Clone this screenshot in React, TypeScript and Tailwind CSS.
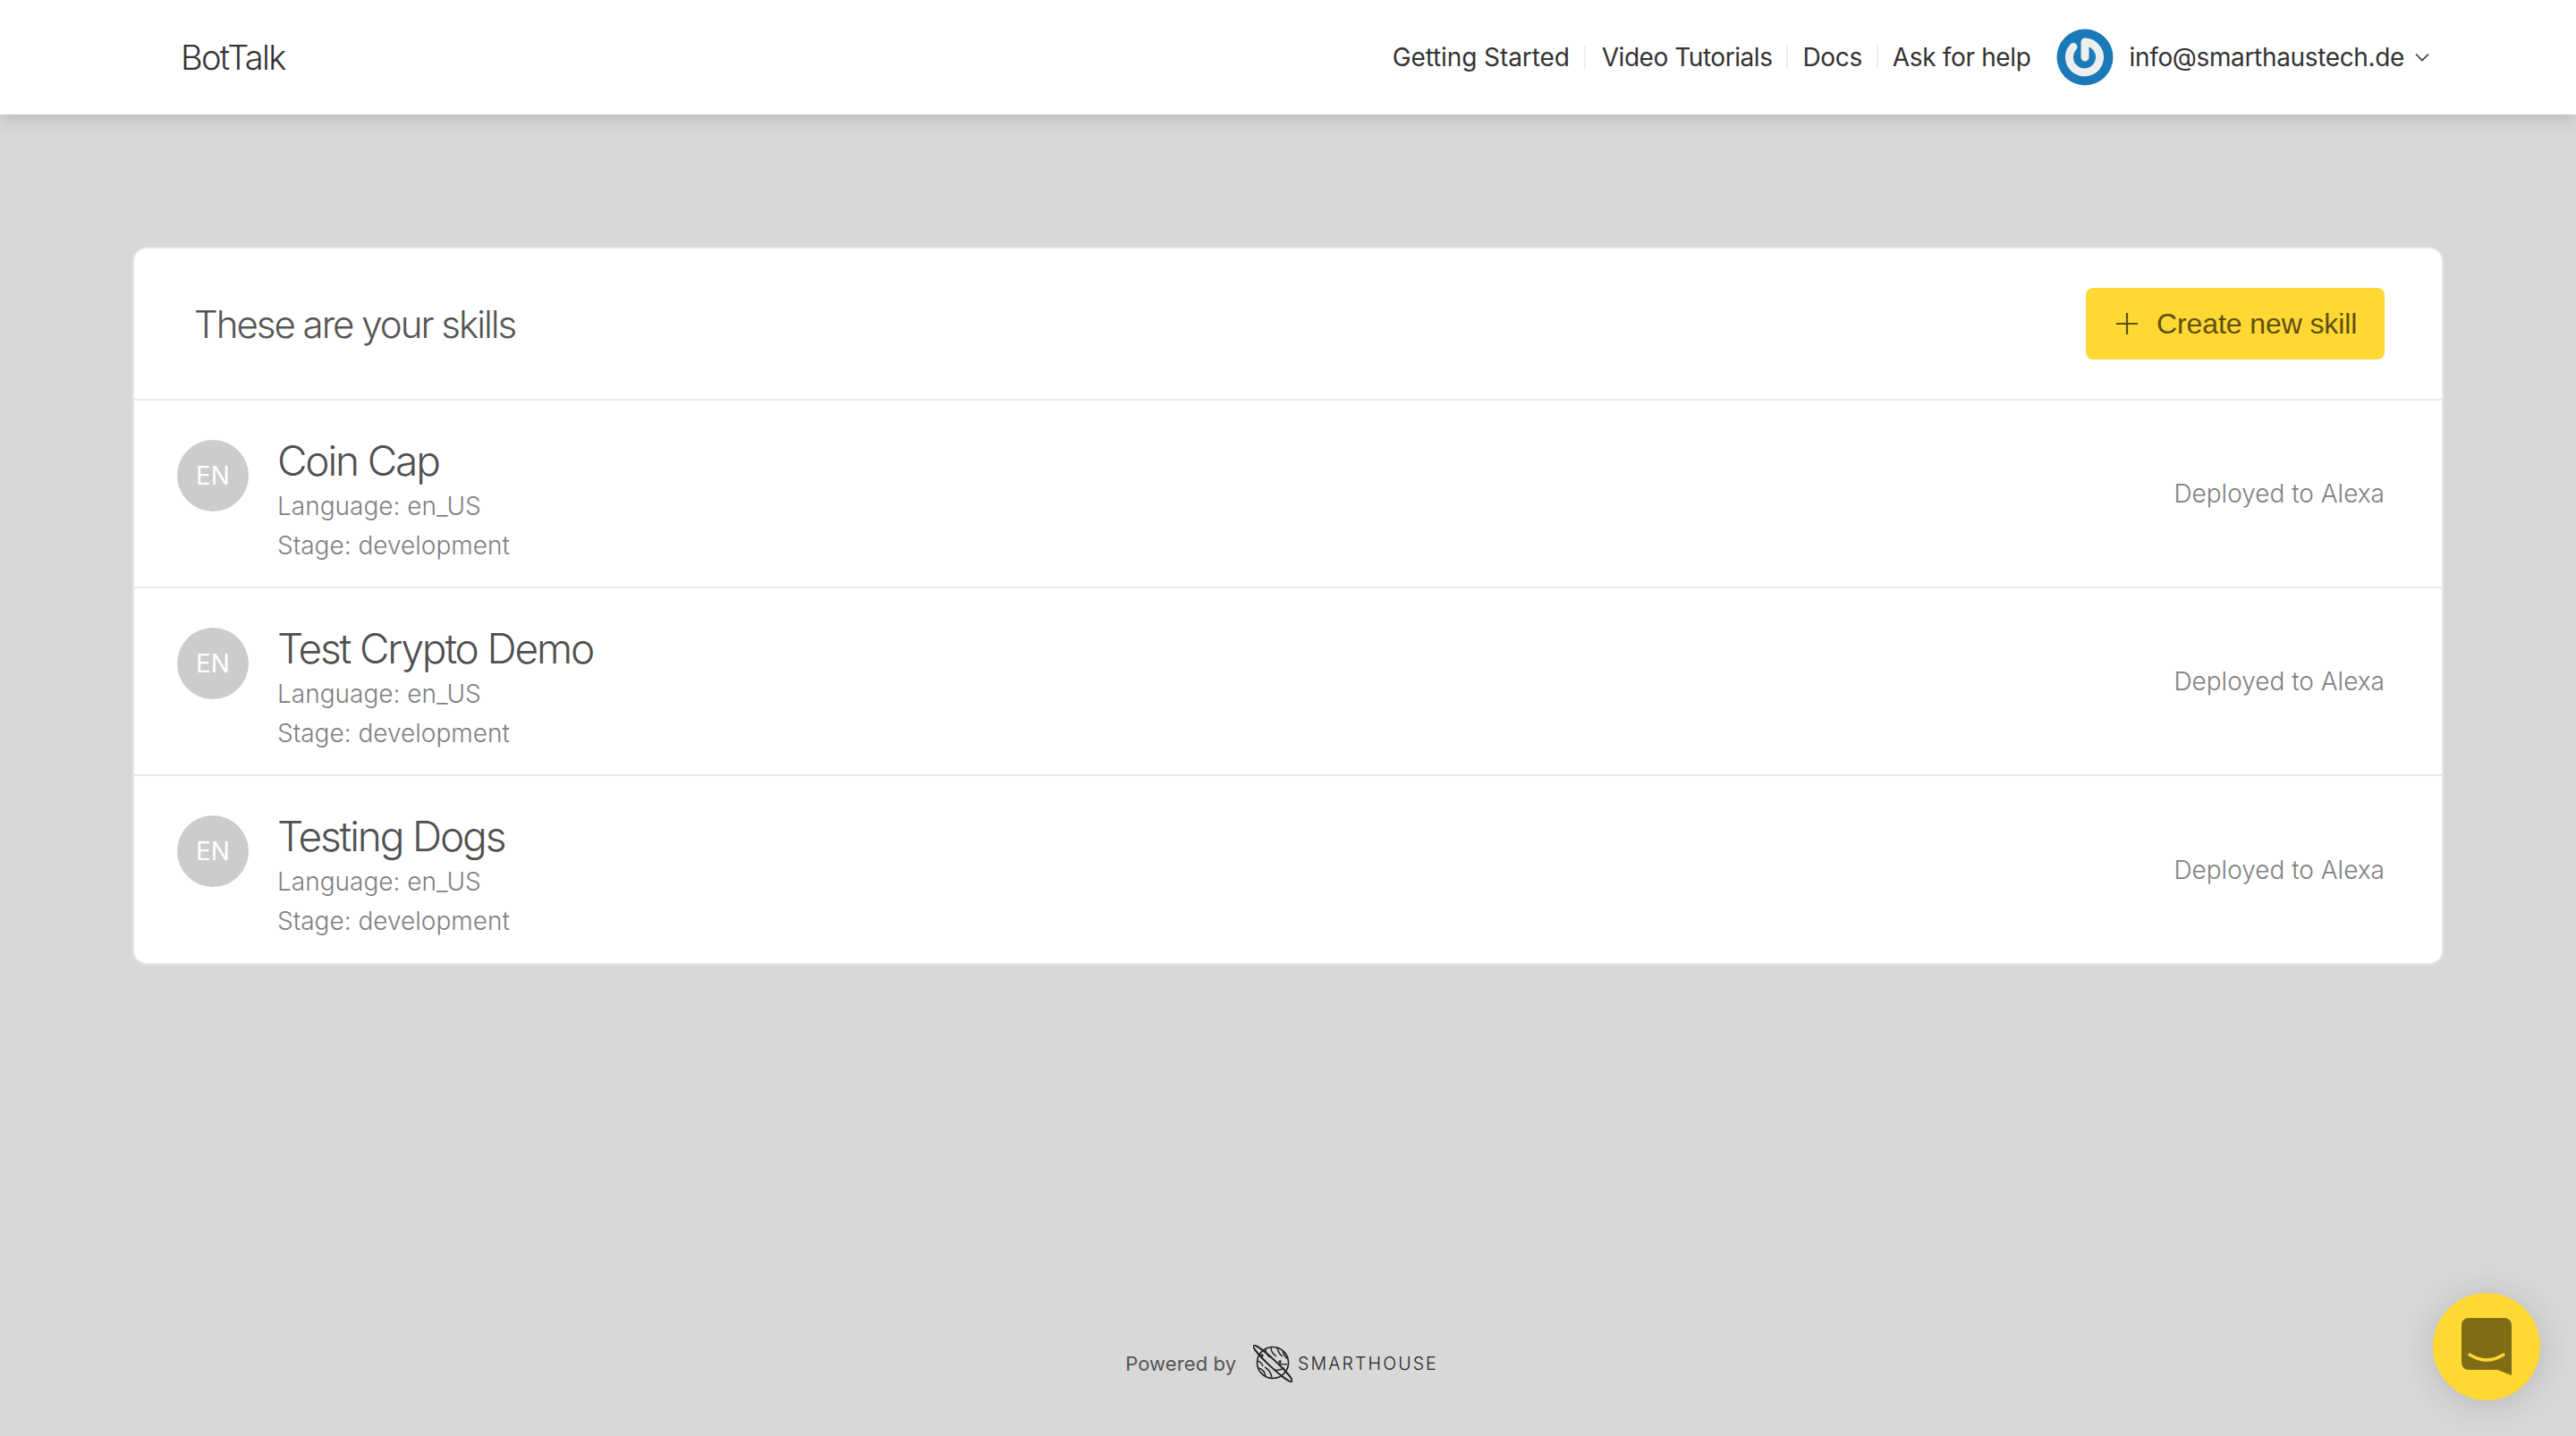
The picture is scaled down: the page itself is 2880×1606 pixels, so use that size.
const skills = ["Coin Cap", "Test Crypto Demo", "Testing Dogs"];

function PowerLogo() {
  return (
    <svg width="64" height="64" viewBox="0 0 64 64" className="shrink-0">
      <circle cx="32" cy="32" r="31.5" fill="#1a7ab9" />
      <path d="M19 20.5 A 17 17 0 1 0 32 15 V32" fill="none" stroke="#eeeeee" strokeWidth="9" strokeLinecap="round" strokeLinejoin="round" />
    </svg>
  );
}

function PlanetLogo() {
  return (
    <svg width="44" height="42" viewBox="0 0 44 42" className="shrink-0" fill="none" stroke="#222222" strokeWidth="1.4">
      <circle cx="22" cy="20" r="17.5" strokeWidth="1.6" />
      <g transform="rotate(43 22 21)">
        <ellipse cx="22" cy="21" rx="29.5" ry="4" strokeWidth="1.9" />
      </g>
      <path d="M14 5 C14 9 16 12 19 14 M20 3 C20 7 23 11 26 13 M27 3.5 C28 8 30 11 33 13 M33 7 C34 11 36 14 39 16" />
      <path d="M5 18 C8 19 10 21 11 24 M6 26 C10 27 13 30 14 35 M13 25 C17 27 20 31 21 37 M23 28 C27 29 31 28 35 26 M28 22 C31 22 35 21 38 22" />
      <circle cx="10" cy="12" r="1" fill="#222222" />
      <circle cx="30" cy="19" r="1" fill="#222222" />
    </svg>
  );
}

export default function App() {
  return (
    <div className="min-h-[1606px] flex flex-col bg-[#d8d8d8] font-['Inter',sans-serif]">
      <header className="h-[128px] shrink-0 bg-white shadow-[0_2px_20px_rgba(0,0,0,0.18)] flex items-center justify-between pl-[202px] pr-[164px]">
        <div className="text-[38px] font-light tracking-[-1.7px] text-[#333333]">BotTalk</div>
        <nav className="flex items-center text-[28px] text-[#333333] tracking-[-0.35px]">
          <a className="pr-4 border-r-2 border-[#eeeeee] leading-[26px] tracking-[-0.1px]">Getting Started</a>
          <a className="pl-[18px] pr-4 border-r-2 border-[#eeeeee] leading-[26px] tracking-[-0.45px]">Video Tutorials</a>
          <a className="pl-[16px] pr-4 border-r-2 border-[#eeeeee] leading-[26px]">Docs</a>
          <a className="pl-[16px] leading-[26px]">Ask for help</a>
          <div className="ml-[28px] mr-[18px]"><PowerLogo /></div>
          <span>info@smarthaustech.de</span>
          <svg width="16" height="10" viewBox="0 0 16 10" className="ml-3" fill="none" stroke="#333333" strokeWidth="1.6"><path d="M1 1.5 L8 8.5 L15 1.5" /></svg>
        </nav>
      </header>

      <main className="mt-[148px] mx-[148px] bg-white rounded-[16px] border-2 border-[#e6e6e6] overflow-hidden">
        <div className="h-[170px] flex items-center justify-between pl-[67px] pr-[64px] border-b-2 border-[#e8e8e8]">
          <h1 className="text-[42px] font-light tracking-[-2px] text-[#555555]">These are your skills</h1>
          <button className="h-[80px] w-[334px] -mt-[1px] rounded-[8px] bg-[#ffd833] flex items-center pl-[33px] gap-[20px] font-['Liberation_Sans',sans-serif] text-[32px] tracking-[-0.1px] text-[#5e4f10]">
            <svg width="26" height="26" viewBox="0 0 26 26" stroke="#5e4f10" strokeWidth="2.2"><path d="M13 1 V25 M1 13 H25" /></svg>
            Create new skill
          </button>
        </div>
        {skills.map((name, i) => (
          <div key={name} className={`flex justify-between pl-[48px] pr-[64px] ${i < 2 ? "h-[210px] border-b-2 border-[#e8e8e8]" : "h-[209px]"}`}>
            <div className="flex items-start pt-[44px] gap-[32px]">
              <div className="w-[80px] h-[80px] rounded-full bg-[#cccccc] flex items-center justify-center text-[28px] text-white">EN</div>
              <div className="-mt-[5px]">
                <div className="text-[46px] font-light leading-[56px] tracking-[-2.15px] text-[#505050]">{name}</div>
                <div className="text-[28px] font-light leading-[44px] text-[#808080] mt-[1px]">Language: en_US</div>
                <div className="text-[28px] font-light leading-[44px] text-[#808080]">Stage: development</div>
              </div>
            </div>
            <div className="self-center text-[28px] font-light text-[#808080]">Deployed to Alexa</div>
          </div>
        ))}
      </main>

      <footer className="mt-[425px] flex items-center justify-center pr-[14px]">
        <span className="text-[22px] tracking-[0.1px] text-[#555555]">Powered by</span>
        <div className="flex items-center gap-[6px] ml-[19px]">
          <PlanetLogo />
          <span className="text-[19.5px] mt-[1px] font-light tracking-[2.15px] text-[#222222]">SMARTHOUSE</span>
        </div>
      </footer>

      <button className="fixed right-[40px] bottom-[40px] w-[120px] h-[120px] rounded-full bg-[#ffd833] shadow-[0_4px_40px_rgba(0,0,0,0.15)] flex items-center justify-center">
        <svg width="56" height="64" viewBox="0 0 56 64">
          <path d="M8 0 H48 A8 8 0 0 1 56 8 V64 L40 58 H8 A8 8 0 0 1 0 50 V8 A8 8 0 0 1 8 0 Z" fill="#7f6c16" />
          <path d="M9 41 Q28 53 47 41" fill="none" stroke="#ffd833" strokeWidth="3.4" strokeLinecap="round" />
        </svg>
      </button>
    </div>
  );
}
